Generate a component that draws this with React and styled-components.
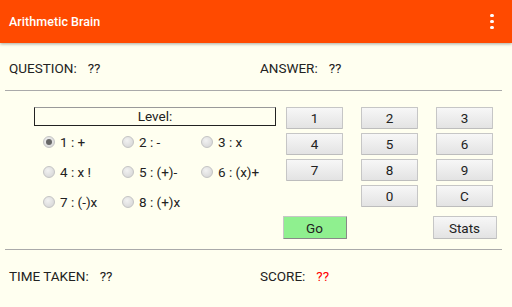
import React, { useState } from "react";
import styled, { createGlobalStyle } from "styled-components";

const GlobalStyle = createGlobalStyle`
  html, body {
    margin: 0;
    padding: 0;
    background: #fffff0;
  }
  body {
    font-family: Roboto, "Noto Sans", sans-serif;
    color: #222;
    width: 512px;
    height: 307px;
    overflow: hidden;
  }
`;

const levels = ["1 : +", "2 : -", "3 : x", "4 : x !", "5 : (+)-", "6 : (x)+", "7 : (-)x", "8 : (+)x"];
const keys = ["1", "2", "3", "4", "5", "6", "7", "8", "9", "", "0", "C"];

const App = () => {
  const [level, setLevel] = useState(0);

  return (
    <Page>
      <GlobalStyle />
      <AppBar>
        <Title>Arithmetic Brain</Title>
        <MenuDots>
          <span />
          <span />
          <span />
        </MenuDots>
      </AppBar>

      <InfoRow $top>
        <InfoCell>
          <Label>QUESTION:</Label>
          <Value>??</Value>
        </InfoCell>
        <InfoCell>
          <Label>ANSWER:</Label>
          <Value>??</Value>
        </InfoCell>
      </InfoRow>

      <Rule />

      <Middle>
        <LevelPanel>
          <LevelBox>Level:</LevelBox>
          <RadioGrid>
            {levels.map((name, i) => (
              <RadioOption key={name} onClick={() => setLevel(i)}>
                <RadioDot $checked={level === i} />
                {name}
              </RadioOption>
            ))}
          </RadioGrid>
        </LevelPanel>

        <Keypad>
          {keys.map((k, i) =>
            k ? <Key key={i}>{k}</Key> : <span key={i} />
          )}
          <Key $wide $go>Go</Key>
          <span />
          <Key $wide>Stats</Key>
        </Keypad>
      </Middle>

      <Rule />

      <InfoRow>
        <InfoCell>
          <Label>TIME TAKEN:</Label>
          <Value>??</Value>
        </InfoCell>
        <InfoCell>
          <Label>SCORE:</Label>
          <Value $red>??</Value>
        </InfoCell>
      </InfoRow>
    </Page>
  );
};

const Page = styled.div`
  width: 512px;
  height: 307px;
  display: flex;
  flex-direction: column;
`;

const AppBar = styled.header`
  height: 43px;
  flex-shrink: 0;
  background: #ff4a00;
  display: flex;
  align-items: center;
  justify-content: space-between;
  padding: 0 0 0 9px;
  box-shadow: 0 1px 3px rgba(0, 0, 0, 0.35);
  position: relative;
  z-index: 1;
`;

const Title = styled.h1`
  margin: 0;
  color: #fff;
  font-size: 12.5px;
  font-weight: 500;
  letter-spacing: 0.05px;
`;

const MenuDots = styled.div`
  width: 40px;
  display: flex;
  flex-direction: column;
  align-items: center;
  gap: 2.5px;
  span {
    width: 3.5px;
    height: 3.5px;
    border-radius: 50%;
    background: #fff;
  }
`;

const InfoRow = styled.div`
  height: ${(p) => (p.$top ? "47px" : "51px")};
  display: grid;
  grid-template-columns: 251px 1fr;
  align-items: center;
  padding: ${(p) => (p.$top ? "3px 0 0 9px" : "0 0 0 9px")};
  box-sizing: border-box;
`;

const InfoCell = styled.div`
  display: flex;
  gap: 11px;
  font-size: 13.5px;
`;

const Label = styled.span``;

const Value = styled.span`
  color: ${(p) => (p.$red ? "#f00" : "#222")};
`;

const Rule = styled.hr`
  margin: 0 10px 0 5px;
  border: 0;
  height: 1px;
  background: #aaa;
  flex-shrink: 0;
`;

const Middle = styled.div`
  height: 158px;
  display: flex;
  padding: 16px 0 0 34px;
  box-sizing: border-box;
`;

const LevelPanel = styled.div`
  width: 243px;
  display: flex;
  flex-direction: column;
`;

const LevelBox = styled.div`
  width: 240px;
  height: 17px;
  border: 1px solid #222;
  border-top-color: #999;
  text-align: center;
  font-size: 13.5px;
  line-height: 17px;
`;

const RadioGrid = styled.div`
  display: grid;
  grid-template-columns: 79px 79px 79px;
  grid-auto-rows: 30px;
  padding-left: 9px;
  margin-top: 1px;
`;

const RadioOption = styled.label`
  display: flex;
  align-items: center;
  gap: 5px;
  font-size: 13.5px;
  cursor: pointer;
`;

const RadioDot = styled.span`
  width: 12px;
  height: 12px;
  border-radius: 50%;
  box-sizing: border-box;
  border: 1px solid #c4c4c4;
  background: radial-gradient(circle at 40% 35%, #f2f2f2, #d2d2d2);
  display: flex;
  align-items: center;
  justify-content: center;
  &::after {
    content: "";
    width: 6px;
    height: 6px;
    border-radius: 50%;
    background: #666;
    display: ${(p) => (p.$checked ? "block" : "none")};
  }
`;

const Keypad = styled.div`
  display: grid;
  grid-template-columns: 75px 75px 75px;
  grid-template-rows: 22px 22px 22px 22px 28px;
  row-gap: 4px;
  justify-items: center;
  align-items: start;
`;

const Key = styled.button`
  width: ${(p) => (p.$wide ? "64px" : "57px")};
  height: ${(p) => (p.$wide ? "23px" : "22px")};
  margin-top: ${(p) => (p.$wide ? "5px" : "0")};
  padding: 0;
  font-family: Roboto, "Noto Sans", sans-serif;
  font-size: 13.5px;
  color: #222;
  border: 1px solid #c6c6c6;
  border-radius: 1px;
  background: ${(p) =>
    p.$go ? "#8ff08f" : "linear-gradient(#f7f7f7, #e3e3e3)"};
  border-right-color: ${(p) => (p.$go ? "#888" : "#c6c6c6")};
  border-bottom-color: ${(p) => (p.$go ? "#888" : "#bdbdbd")};
  cursor: pointer;
`;

export default App;
